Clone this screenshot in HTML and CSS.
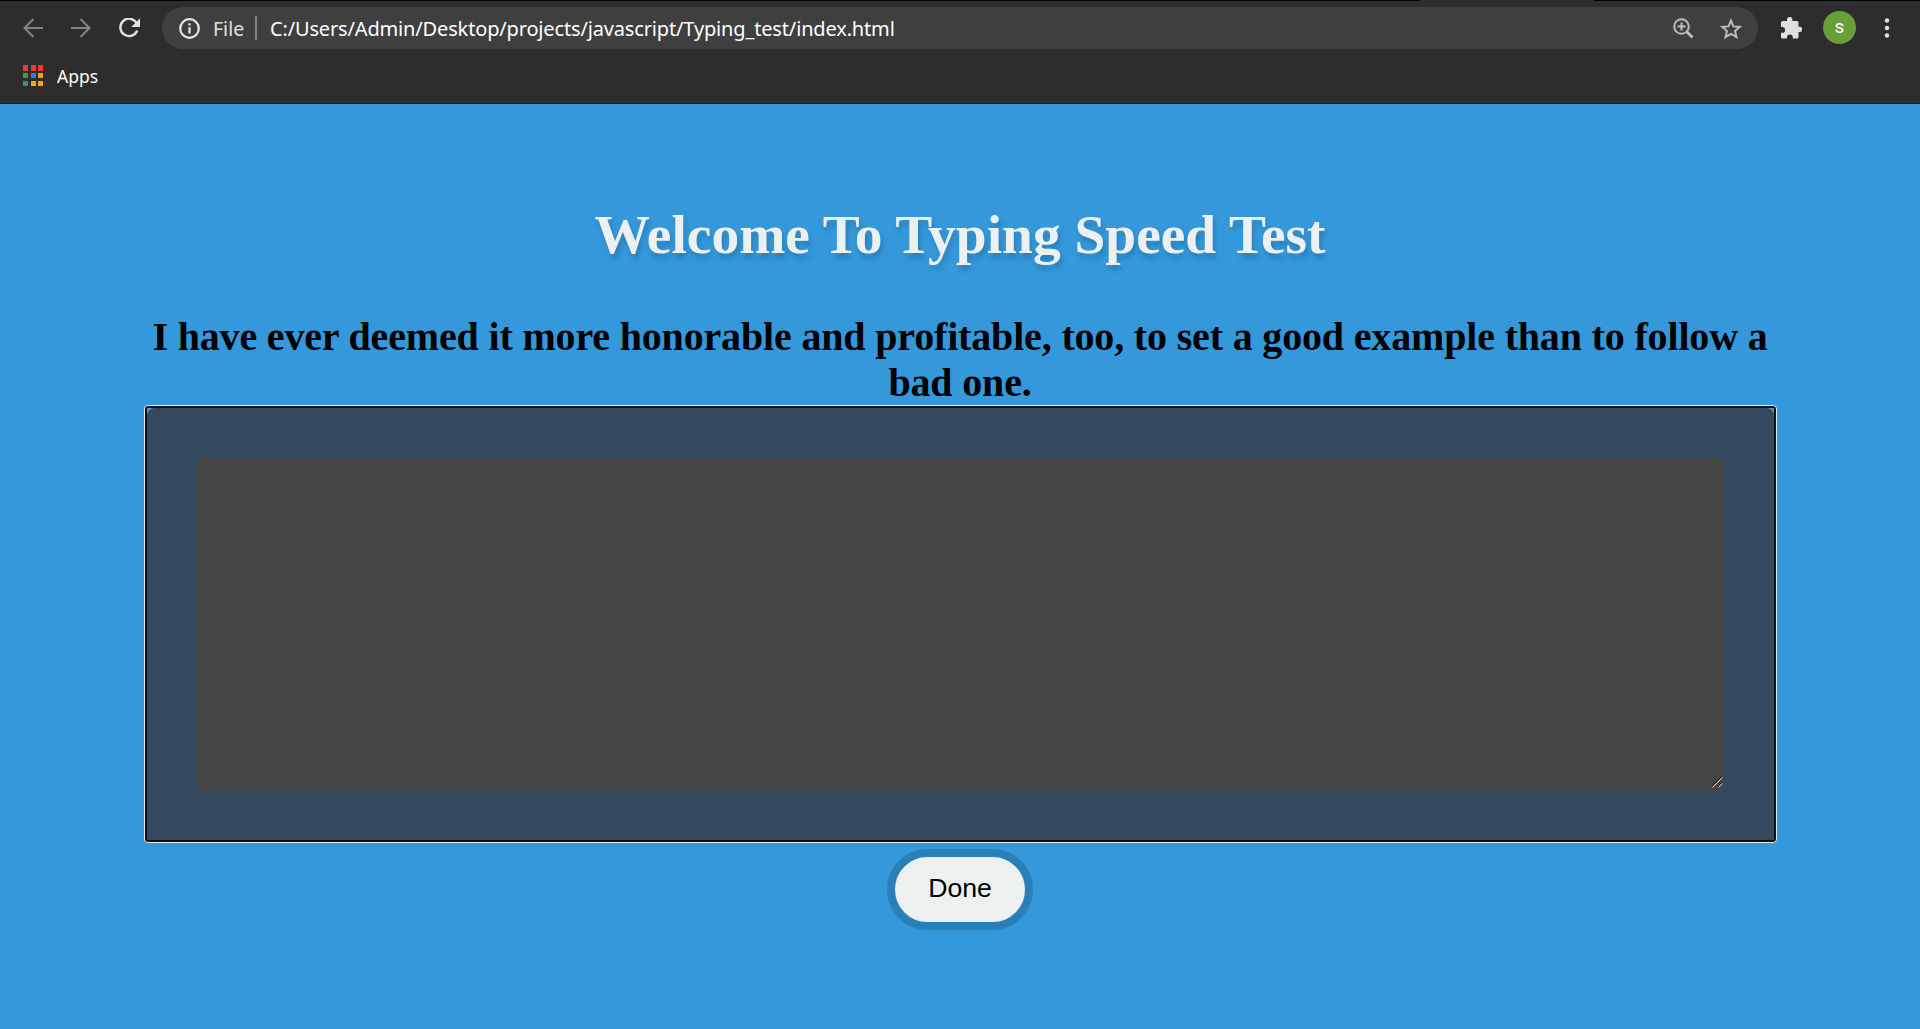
FILE: index.html
```html
<!DOCTYPE html>
<html lang="en">
<head>
<meta charset="utf-8">
<title>Typing Test</title>
<link rel="stylesheet" href="styles.css">
</head>
<body>
<header class="browser">
  <div class="tab-edge"><span class="active-tab"></span></div>
  <div class="toolbar">
    <div class="nav">
      <svg class="dim" width="20" height="20" viewBox="0 0 20 20"><path d="M20 10H1.5M10.5 1L1.5 10l9 9"/></svg>
      <svg class="dim" width="20" height="20" viewBox="0 0 20 20"><path d="M0 10h18.500M9.500 1l9 9-9 9"/></svg>
      <svg class="reload" width="21" height="20" viewBox="0 0 21 20"><path class="arc" d="M17.600 5A8.700 8.700 0 1 0 18.200 12.500"/><path class="tip" d="M21 .3V9h-8.700z"/></svg>
    </div>
    <div class="address">
      <svg class="info" width="21" height="21" viewBox="0 0 21 21"><circle cx="10.500" cy="10.500" r="9.300"/><path d="M10.500 9.200v6.300M10.500 5.200v2.300"/></svg>
      <span class="scheme">File</span>
      <span class="divider"></span>
      <span class="url">C:/Users/Admin/Desktop/projects/javascript/Typing_test/index.html</span>
      <svg class="magnifier" width="21" height="21" viewBox="0 0 21 21"><circle cx="8.500" cy="8.500" r="7.300"/><path class="handle" d="M13.500 13.500l6 6"/><path d="M4.500 8.500h8M8.500 4.500v8"/></svg>
      <svg class="star" width="22" height="21" viewBox="0 0 22 21"><path d="M11 2.600l2.500 5.800 6.300.5-4.800 4.100 1.500 6.100-5.500-3.300-5.500 3.300L7 13 2.200 8.900l6.300-.5z"/></svg>
    </div>
    <svg class="puzzle" width="21" height="22" viewBox="0 0 21 22"><path d="M0 5.500Q0 4 1.500 4H6V2.800a2.700 2.700 0 0 1 5.400 0V4H16q1.500 0 1.500 1.500V9.700h1a2.700 2.700 0 0 1 0 5.400h-1v4.800q0 1.600-1.500 1.600h-4.200v-1.200a2.900 2.900 0 0 0-5.800 0v1.200H1.500Q0 21.500 0 20v-4.200h1.200a2.900 2.900 0 0 0 0-5.800H0z"/></svg>
    <span class="avatar">s</span>
    <svg class="menu" width="6" height="20" viewBox="0 0 6 20"><circle cx="3" cy="2.500" r="2.200"/><circle cx="3" cy="10" r="2.200"/><circle cx="3" cy="17.500" r="2.200"/></svg>
  </div>
  <div class="bookmarks">
    <div class="grid"><i class="r"></i><i class="r"></i><i class="r"></i><i class="g"></i><i class="b"></i><i class="y"></i><i class="g"></i><i class="y"></i><i class="y"></i></div>
    <span>Apps</span>
  </div>
</header>
<main class="page">
  <h1 class="title">Welcome To Typing Speed Test</h1>
  <h2 class="quote">I have ever deemed it more honorable and profitable, too, to set a good example than to follow a<br>bad one.</h2>
  <div class="focus-ring"><div class="corners"><div class="field"><svg class="grip" width="12" height="12" viewBox="0 0 12 12"><path class="shade" d="M.5 10.500l10-10M6.500 10.500l4-4"/><path class="light" d="M1.500 11.500l10-10M7.500 11.500l4-4"/></svg></div></div></div>
  <button class="done">Done</button>
</main>
</body>
</html>
```
FILE: styles.css
```css
* { box-sizing: border-box; }
body { margin: 0; height: 1029px; overflow: hidden; display: flex; flex-direction: column; background: #3498db; }
svg { display: block; flex: none; fill: none; }

.browser { height: 104px; flex: none; background: #2d2d2d; border-bottom: 1px solid #202124; font-family: "Noto Sans", sans-serif; color: #fff; }
.tab-edge { height: 1px; background: #000; padding-left: 1420px; }
.active-tab { display: block; width: 174px; height: 1px; background: #2d2d2d; }
.toolbar { height: 53px; display: flex; align-items: center; padding-left: 23px; }
.nav { display: flex; gap: 28px; width: 139px; flex: none; }
.dim { stroke: #858585; stroke-width: 2; }
.reload .arc { stroke: #e0e0e0; stroke-width: 2.4; }
.reload .tip { fill: #e0e0e0; }
.address { width: 1596px; height: 42px; margin-top: 1px; border-radius: 21px; background: #3f3f3f; display: flex; align-items: center; padding: 0 16px 0 17px; flex: none; }
.info { stroke: #e8e8e8; stroke-width: 2.200; }
.scheme { width: 31px; margin-left: 13px; font-size: 19.500px; color: #e0e0e0; }
.divider { width: 2px; height: 24px; margin: 0 13px 0 11px; background: #858585; }
.url { font-size: 20px; letter-spacing: -.155px; flex: 1; white-space: nowrap; }
.magnifier { stroke: #bdbdbd; stroke-width: 2; margin-right: 26px; }
.magnifier .handle { stroke-width: 2.800; }
.star { stroke: #bdbdbd; stroke-width: 2; }
.puzzle { fill: #e0e0e0; margin-left: 23px; }
.avatar { width: 33px; height: 33px; margin-left: 21px; border-radius: 50%; background: #689f38; text-align: center; font: 400 19px/31px Roboto, sans-serif; }
.menu { fill: #e0e0e0; margin-left: 28px; }
.bookmarks { display: flex; align-items: center; gap: 14px; height: 43px; padding-left: 23px; font-size: 17.500px; line-height: 24px; }
.grid { display: grid; grid-template-columns: repeat(3, 5px); grid-auto-rows: 5.500px; gap: 2.250px 2.500px; }
.r { background: #f5372f; }
.g { background: #2e9e50; }
.b { background: #1a86f5; }
.y { background: #f5a40a; }

.page { display: flex; flex-direction: column; align-items: center; padding-top: 99px; font-family: "Liberation Serif", serif; }
.title { margin: 0; font-size: 55.450px; line-height: 64px; color: #ecf0f1; text-shadow: 2px 5px 5px rgba(0, 0, 0, .17); white-space: nowrap; }
.quote { margin: 47px 0 -1px; font-size: 40px; line-height: 46px; letter-spacing: -.165px; text-align: center; color: #000; white-space: nowrap; }
.focus-ring { width: 1633px; height: 438px; margin-left: 1px; flex: none; border: 1px solid #e5eaee; border-radius: 4px; background: #101010; padding: 2px; }
.corners { height: 432px; background: #3498db; }
.field { height: 432px; border: 50px solid #34495e; border-radius: 8px 8px 0 0; background: #444; display: flex; align-items: flex-end; justify-content: flex-end; padding: 0 1px 2px 0; }
.shade { stroke: #222; stroke-width: 1; }
.light { stroke: #ddd; stroke-width: 1; }
.done { width: 146px; height: 81px; margin: 6px 0 0; padding: 0 0 2px; border: 8px solid #2980b9; border-radius: 41px; background: #ecf0f1; color: #000; font: 26.670px "Liberation Sans", sans-serif; }
```
